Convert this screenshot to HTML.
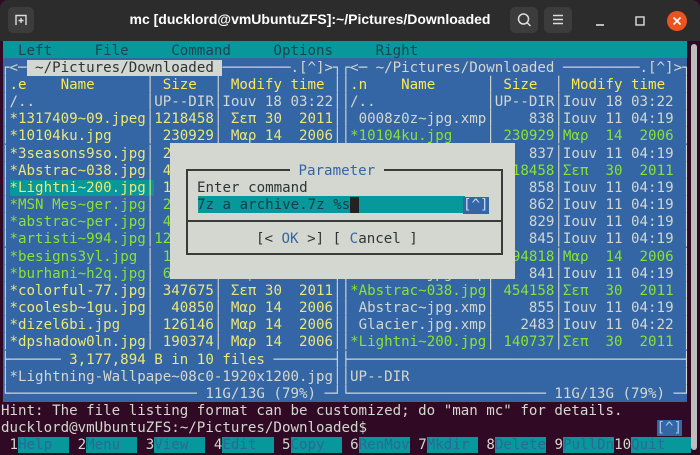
<!DOCTYPE html>
<html><head><meta charset="utf-8"><style>
*{box-sizing:border-box}
body{margin:0;width:700px;height:454px;overflow:hidden;background:#300a24;position:relative;font-family:"DejaVu Sans Mono","Liberation Mono",monospace}
.r{position:absolute;left:1px;height:17.17px;line-height:17.17px;font-size:14.15px;white-space:pre;color:#d3d7cf;margin-top:1.5px}
.h{color:#fce94f}.y{color:#ece776}.g{color:#8ae234}
.cur{background:#06989a}
.hl{background:#d3d7cf;color:#2e3436}
.fk{background:#06989a;color:#2f6797}
.tb{position:absolute;left:0;top:0;width:700px;height:41px;background:#2c2c2c;border-radius:8px 8px 0 0}
.btn{position:absolute;background:#3c3c3c;border-radius:5px}
</style></head><body>
<div class="tb">
 <div class="btn" style="left:8px;top:7px;width:26px;height:26px"><svg width="26" height="26" viewBox="0 0 26 26"><path d="M8 18V8.5h10V18" fill="none" stroke="#ddd" stroke-width="1.4"/><path d="M13 11v5M10.5 13.5h5" stroke="#ddd" stroke-width="1.4"/></svg></div>
 <div style="position:absolute;left:0;width:620px;top:11px;text-align:center;font:bold 14px 'Liberation Sans',sans-serif;color:#fff;padding-left:0">mc [ducklord@vmUbuntuZFS]:~/Pictures/Downloaded</div>
 <div class="btn" style="left:510px;top:7px;width:28px;height:26px"><svg width="28" height="26"><circle cx="13.5" cy="12" r="5" fill="none" stroke="#ddd" stroke-width="1.5"/><path d="M17 15.5l3.5 3.5" stroke="#ddd" stroke-width="1.5"/></svg></div>
 <div class="btn" style="left:544px;top:7px;width:28px;height:26px"><svg width="28" height="26"><path d="M9 8.5h10M9 12.5h10M9 16.5h10" stroke="#ddd" stroke-width="1.4"/></svg></div>
 <svg style="position:absolute;left:590px;top:10px" width="100" height="22"><path d="M6 15h8" stroke="#ddd" stroke-width="1.6"/><rect x="46" y="7" width="8" height="8" fill="none" stroke="#ddd" stroke-width="1.4"/><circle cx="87" cy="11" r="10" fill="#e95420"/><path d="M83.5 7.5l7 7M90.5 7.5l-7 7" stroke="#fff" stroke-width="1.6"/></svg>
</div>
<div style="position:absolute;left:3px;top:41px;width:684px;height:17.17px;background:#06989a"></div>
<div style="position:absolute;left:3px;top:58.17px;width:684px;height:343.4px;background:#3465a4"></div>
<div style="position:absolute;left:691px;top:44px;width:6px;height:406px;background:#bdbdbd;border-radius:3px"></div>

<div class="r" style="top:41px;color:#1f4452">  Left     File     Command     Options     Right</div>
<div class="r" style="top:58.17px">┌<─<span class="hl"> ~/Pictures/Downloaded </span>────────.[^]>┐┌<─ ~/Pictures/Downloaded ─────────.[^]>┐</div>
<div class="r" style="top:75.34px">│<span class="h">.e    Name      </span>│<span class="h"> Size  </span>│<span class="h"> Modify time </span>││<span class="h">.n    Name      </span>│<span class="h"> Size  </span>│<span class="h"> Modify time  </span>│</div>
<div class="r" style="top:92.51px">│/..             │UP--DIR│Iouv 18 03:22││/..             │UP--DIR│Iouv 18 03:22 │</div>
<div class="r" style="top:109.68px">│<span class="y">*1317409~09.jpeg</span>│<span class="y">1218458</span>│<span class="y"> Σεπ 30  2011</span>││ 0008z0z~jpg.xmp│    838│Iouv 11 04:19 │</div>
<div class="r" style="top:126.85px">│<span class="y">*10104ku.jpg    </span>│<span class="y"> 230929</span>│<span class="y"> Μαρ 14  2006</span>││<span class="g">*10104ku.jpg    </span>│<span class="g"> 230929</span>│<span class="g">Μαρ  14  2006 </span>│</div>
<div class="r" style="top:144.02px">│<span class="y">*3seasons9so.jpg</span>│<span class="y"> 245612</span>│<span class="y"> Σεπ 30  2011</span>││ 0108abc~jpg.xmp│    837│Iouv 11 04:19 │</div>
<div class="r" style="top:161.19px">│<span class="y">*Abstrac~038.jpg</span>│<span class="y"> 454158</span>│<span class="y"> Σεπ 30  2011</span>││<span class="g">*1317409~09.jpeg</span>│<span class="g">1218458</span>│<span class="g">Σεπ  30  2011 </span>│</div>
<div class="r" style="top:178.36px">│<span class="cur y">*Lightni~200.jpg│</span><span class="y"> 140737</span>│<span class="y"> Σεπ 30  2011</span>││ 1317409~peg.xmp│    858│Iouv 11 04:19 │</div>
<div class="r" style="top:195.53px">│<span class="g">*MSN Mes~ger.jpg</span>│<span class="g"> 241327</span>│<span class="g"> Μαρ 14  2006</span>││ 3seasons~jpg.xm│    862│Iouv 11 04:19 │</div>
<div class="r" style="top:212.7px">│<span class="g">*abstrac~per.jpg</span>│<span class="g"> 418840</span>│<span class="g"> Μαρ 14  2006</span>││ 10104ku.jpg.xmp│    829│Iouv 11 04:19 │</div>
<div class="r" style="top:229.87px">│<span class="g">*artisti~994.jpg</span>│<span class="g">1245112</span>│<span class="g"> Μαρ 14  2006</span>││ MSN Mes~jpg.xmp│    845│Iouv 11 04:19 │</div>
<div class="r" style="top:247.04px">│<span class="g">*besigns3yl.jpg </span>│<span class="g"> 167431</span>│<span class="g"> Μαρ 14  2006</span>││<span class="g">*MSN Mes~ger.jpg</span>│<span class="g">1594818</span>│<span class="g">Μαρ  14  2006 </span>│</div>
<div class="r" style="top:264.21px">│<span class="g">*burhani~h2q.jpg</span>│<span class="g"> 612004</span>│<span class="g"> Μαρ 14  2006</span>││ abstrac~jpg.xmp│    841│Iouv 11 04:19 │</div>
<div class="r" style="top:281.38px">│<span class="y">*colorful-77.jpg</span>│<span class="y"> 347675</span>│<span class="y"> Σεπ 30  2011</span>││<span class="g">*Abstrac~038.jpg</span>│<span class="g"> 454158</span>│<span class="g">Σεπ  30  2011 </span>│</div>
<div class="r" style="top:298.55px">│<span class="y">*coolesb~1gu.jpg</span>│<span class="y">  40850</span>│<span class="y"> Μαρ 14  2006</span>││ Abstrac~jpg.xmp│    855│Iouv 11 04:19 │</div>
<div class="r" style="top:315.72px">│<span class="y">*dizel6bi.jpg   </span>│<span class="y"> 126146</span>│<span class="y"> Μαρ 14  2006</span>││ Glacier.jpg.xmp│   2483│Iouv 11 04:22 │</div>
<div class="r" style="top:332.89px">│<span class="y">*dpshadow0ln.jpg</span>│<span class="y"> 190374</span>│<span class="y"> Μαρ 14  2006</span>││<span class="g">*Lightni~200.jpg</span>│<span class="g"> 140737</span>│<span class="g">Σεπ  30  2011 </span>│</div>
<div class="r" style="top:350.06px">├──────<span class="y"> 3,177,894 B in 10 files </span>───────┤├───────────────────────────────────────┤</div>
<div class="r" style="top:367.23px">│*Lightning-Wallpape~08c0-1920x1200.jpg││UP--DIR                                │</div>
<div class="r" style="top:384.4px">└────────────────────── 11G/13G (79%) ─┘└─────────────────────── 11G/13G (79%) ─┘</div>
<div class="r" style="top:401.57px">Hint: The file listing format can be customized; do "man mc" for details.</div>
<div class="r" style="top:418.74px">ducklord@vmUbuntuZFS:~/Pictures/Downloaded$                                  <span style="background:#3465a4;color:#a9c6e8">[^]</span></div>
<div class="r" style="top:435.91px"> 1<span class="fk">Help  </span> 2<span class="fk">Menu  </span> 3<span class="fk">View  </span> 4<span class="fk">Edit  </span> 5<span class="fk">Copy  </span> 6<span class="fk">RenMov</span> 7<span class="fk">Mkdir </span> 8<span class="fk">Delete</span> 9<span class="fk">PullDn</span>10<span class="fk">Quit   </span></div>

<div style="position:absolute;left:170px;top:143px;width:345px;height:136px;background:#d3d7cf"></div>
<div style="position:absolute;left:186px;top:169px;width:317px;height:86px;border:2px solid #3a3a3a"></div>
<div style="position:absolute;left:186px;top:220px;width:317px;height:2px;background:#3a3a3a"></div>
<div class="r" style="top:161.19px;left:290px;background:#d3d7cf;color:#3465a4"> Parameter </div>
<div class="r" style="top:178.36px;left:197px;color:#2e3436">Enter command</div>
<div style="position:absolute;left:198px;top:196px;width:267px;height:17.17px;background:#06989a"></div>
<div class="r" style="top:195.53px;left:197px;color:#1d3b44">7z a archive.7z %s<span style="background:#222;color:#222"> </span></div>
<div class="r" style="top:195.53px;left:463px;background:#3465a4;color:#c8d8f0">[^]</div>
<div class="r" style="top:229.87px;left:256px;color:#2e3436">[&lt; <span style="color:#3465a4">OK</span> &gt;] [ <span style="color:#3465a4">C</span>ancel ]</div>
</body></html>
